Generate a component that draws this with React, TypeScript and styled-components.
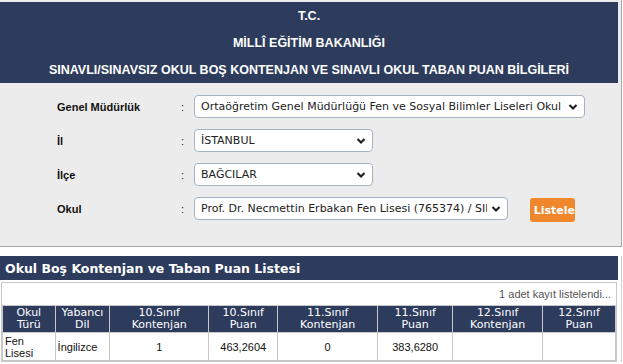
import styled, { createGlobalStyle } from 'styled-components';

const GlobalStyle = createGlobalStyle`
  html, body {
    margin: 0;
    padding: 0;
    background: #ffffff;
  }
  body {
    font-family: "Liberation Sans", Arial, sans-serif;
  }
`;

const NAVY = '#2d3b5d';

const Page = styled.div`
  width: 623px;
  display: flex;
  flex-direction: column;
`;

const SearchPanel = styled.div`
  width: 621px;
  background: #ececec;
  border-right: 1px solid #a9a9a9;
  border-bottom: 1px solid #a9a9a9;
  padding-top: 2px;
  display: flex;
  flex-direction: column;
`;

const Header = styled.div`
  width: 618px;
  height: 81px;
  background: ${NAVY};
  display: grid;
  grid-template-rows: 27px 27px 27px;
  align-items: center;
  justify-items: center;
`;

const HeaderLine = styled.div`
  color: #ffffff;
  font-weight: bold;
  font-size: 12.5px;
`;

const Form = styled.div`
  display: flex;
  flex-direction: column;
  gap: 11px;
  padding: 12px 0 26px 57px;
`;

const Row = styled.div`
  display: flex;
  align-items: center;
  height: 23px;
`;

const Label = styled.div`
  width: 124px;
  font-size: 11px;
  font-weight: bold;
  color: #111;
`;

const Colon = styled.div`
  width: 13px;
  font-size: 11px;
  color: #222;
`;

const Select = styled.div<{ $w: number }>`
  width: ${(p) => p.$w}px;
  height: 23px;
  box-sizing: border-box;
  background: #fff;
  border: 1px solid #a7b3c2;
  border-radius: 4px;
  display: flex;
  align-items: center;
  padding: 0 6px 0 6px;
  gap: 4px;
`;

const SelectText = styled.span`
  flex: 1;
  overflow: hidden;
  white-space: nowrap;
  font-family: "DejaVu Sans", Verdana, sans-serif;
  font-size: 11px;
  color: #222;
`;

const Chevron = () => (
  <svg width="10" height="8" viewBox="0 0 10 8">
    <path d="M1.5 2 L5 5.5 L8.5 2" fill="none" stroke="#222" strokeWidth="2.2" />
  </svg>
);

const ListButton = styled.div`
  margin-left: 22px;
  width: 45px;
  height: 24px;
  margin-top: 3px;
  background: #f0872c;
  border-radius: 3px;
  color: #fff;
  font-family: "DejaVu Sans", Verdana, sans-serif;
  font-weight: bold;
  font-size: 11px;
  display: flex;
  align-items: center;
  justify-content: flex-end;
  overflow: hidden;
`;

const ResultPanel = styled.div`
  margin-top: 9px;
  width: 621px;
  border-right: 1px solid #cfcfcf;
  display: flex;
  flex-direction: column;
`;

const ResultTitle = styled.div`
  width: 618px;
  height: 24px;
  background: ${NAVY};
  color: #fff;
  font-family: "DejaVu Sans", Verdana, sans-serif;
  font-weight: bold;
  font-size: 12.5px;
  display: flex;
  align-items: center;
  padding-left: 5px;
  box-sizing: border-box;
`;

const ResultBox = styled.div`
  margin: 2px 0 0 1px;
  width: 616px;
  border: 1px solid #c8c8c8;
  box-sizing: border-box;
`;

const Count = styled.div`
  height: 22px;
  display: flex;
  align-items: center;
  justify-content: flex-end;
  padding-right: 5px;
  font-size: 11px;
  color: #555;
`;

const Table = styled.table`
  width: 100%;
  border-collapse: collapse;
  table-layout: fixed;
`;

const Th = styled.th<{ $w: number }>`
  width: ${(p) => p.$w}px;
  background: ${NAVY};
  color: #fff;
  font-family: "DejaVu Sans", Verdana, sans-serif;
  font-weight: normal;
  font-size: 11px;
  line-height: 12px;
  height: 26px;
  padding: 0;
  border: 1px solid #c8c8c8;
  text-align: center;
`;

const Td = styled.td<{ $left?: boolean }>`
  height: 27px;
  padding: 0 2px;
  font-size: 11px;
  line-height: 12px;
  color: #111;
  border: 1px solid #c8c8c8;
  text-align: ${(p) => (p.$left ? 'left' : 'center')};
`;

const columns: [string, string, number][] = [
  ['Okul', 'Türü', 51],
  ['Yabancı', 'Dil', 53],
  ['10.Sınıf', 'Kontenjan', 97],
  ['10.Sınıf', 'Puan', 67],
  ['11.Sınıf', 'Kontenjan', 98],
  ['11.Sınıf', 'Puan', 73],
  ['12.Sınıf', 'Kontenjan', 88],
  ['12.Sınıf', 'Puan', 71],
];

export default function App() {
  return (
    <Page>
      <GlobalStyle />
      <SearchPanel>
        <Header>
          <HeaderLine>T.C.</HeaderLine>
          <HeaderLine>MİLLÎ EĞİTİM BAKANLIĞI</HeaderLine>
          <HeaderLine>
            SINAVLI/SINAVSIZ OKUL BOŞ KONTENJAN VE SINAVLI OKUL TABAN PUAN BİLGİLERİ
          </HeaderLine>
        </Header>
        <Form>
          <Row>
            <Label>Genel Müdürlük</Label>
            <Colon>:</Colon>
            <Select $w={391}>
              <SelectText>
                Ortaöğretim Genel Müdürlüğü Fen ve Sosyal Bilimler Liseleri Okul Listesi
              </SelectText>
              <Chevron />
            </Select>
          </Row>
          <Row>
            <Label>İl</Label>
            <Colon>:</Colon>
            <Select $w={179}>
              <SelectText>İSTANBUL</SelectText>
              <Chevron />
            </Select>
          </Row>
          <Row>
            <Label>İlçe</Label>
            <Colon>:</Colon>
            <Select $w={179}>
              <SelectText>BAĞCILAR</SelectText>
              <Chevron />
            </Select>
          </Row>
          <Row>
            <Label>Okul</Label>
            <Colon>:</Colon>
            <Select $w={314}>
              <SelectText>
                Prof. Dr. Necmettin Erbakan Fen Lisesi (765374) / SINAVLI
              </SelectText>
              <Chevron />
            </Select>
            <ListButton>Listele</ListButton>
          </Row>
        </Form>
      </SearchPanel>
      <ResultPanel>
        <ResultTitle>Okul Boş Kontenjan ve Taban Puan Listesi</ResultTitle>
        <ResultBox>
          <Count>1 adet kayıt listelendi...</Count>
          <Table>
            <thead>
              <tr>
                {columns.map(([a, b, w], i) => (
                  <Th key={i} $w={w}>
                    {a}
                    <br />
                    {b}
                  </Th>
                ))}
              </tr>
            </thead>
            <tbody>
              <tr>
                <Td $left>
                  Fen
                  <br />
                  Lisesi
                </Td>
                <Td $left>İngilizce</Td>
                <Td>1</Td>
                <Td>463,2604</Td>
                <Td>0</Td>
                <Td>383,6280</Td>
                <Td></Td>
                <Td></Td>
              </tr>
            </tbody>
          </Table>
        </ResultBox>
      </ResultPanel>
    </Page>
  );
}
